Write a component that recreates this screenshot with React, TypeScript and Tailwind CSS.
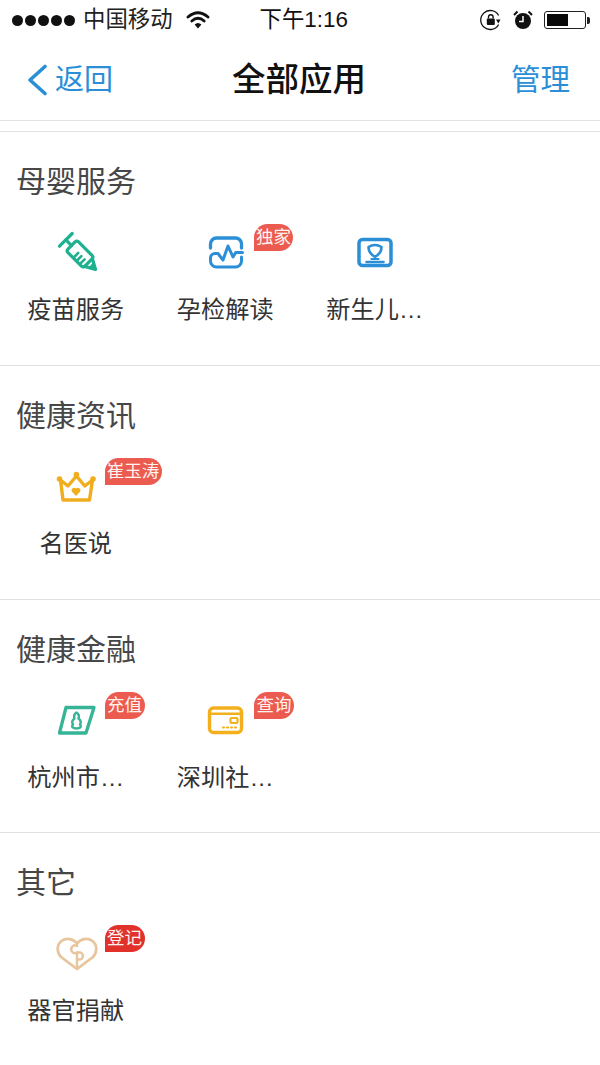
const blue = "#2b8fd8";

function Syringe() {
  return (
    <svg width="48" height="48" viewBox="0 0 48 48" fill="none" stroke="#1fb08f" strokeWidth="3.2" strokeLinecap="round" strokeLinejoin="round">
      <g transform="rotate(45 28 25)">
        <path d="M8 16 V34" />
        <path d="M8 25 H16" />
        <rect x="16" y="17.5" width="24" height="15" rx="2.5" />
        <path d="M26 25.5 V32 M30.5 25.5 V32 M35 25.5 V32" strokeWidth="2.6" />
        <path d="M40 19.5 L50 25 L40 30.5" />
        <path d="M44 22 L50 25 L44 28 Z" fill="#1fb08f" strokeWidth="1" />
      </g>
    </svg>
  );
}

function Pulse() {
  return (
    <svg width="48" height="48" viewBox="0 0 48 48" fill="none" stroke="#2b8fd8" strokeWidth="3.3" strokeLinecap="round" strokeLinejoin="round">
      <path d="M9.5 19 V15 A6 6 0 0 1 15.5 9 H34.5 A6 6 0 0 1 40.5 15 V19" />
      <path d="M40.5 28 V32 A6 6 0 0 1 34.5 38 H15.5 A6 6 0 0 1 9.5 32 V29 A4.5 4.5 0 0 1 14 24.5 H17 L22 31 L27 17 L32 28 L34.7 23.5 H41.5" strokeWidth="3" />
    </svg>
  );
}

function Portrait() {
  return (
    <svg width="48" height="48" viewBox="0 0 48 48" fill="none" stroke="#2b8fd8" strokeWidth="3.5" strokeLinecap="round" strokeLinejoin="round">
      <rect x="8" y="10.5" width="32" height="26" rx="3.5" />
      <path d="M17.5 18 Q24 14 30.5 18 Q30.5 24 24 28 Q17.5 24 17.5 18 Z" strokeWidth="2.6" />
      <path d="M20.5 30 H27.5" strokeWidth="2.2" />
      <path d="M15.5 33 H32.5" strokeWidth="2.6" />
    </svg>
  );
}

function Crown() {
  return (
    <svg width="48" height="48" viewBox="0 0 48 48" fill="none" stroke="#f0ad1e" strokeWidth="3.4" strokeLinecap="round" strokeLinejoin="round">
      <path d="M8.5 17 L11 37 H37.5 L40.5 17 L32.75 23 L24.5 13 L16 23 Z" />
      <circle cx="7.5" cy="16" r="2.8" fill="#f0ad1e" stroke="none" />
      <circle cx="24.4" cy="11.5" r="2.8" fill="#f0ad1e" stroke="none" />
      <circle cx="41" cy="16" r="2.8" fill="#f0ad1e" stroke="none" />
      <path d="M24 33 L19.8 28.6 A2.6 2.6 0 0 1 24 25.6 A2.6 2.6 0 0 1 28.2 28.6 Z" fill="#f0ad1e" stroke="none" />
    </svg>
  );
}

function Bankbook() {
  return (
    <svg width="48" height="48" viewBox="0 0 48 48" fill="none" stroke="#35b596" strokeWidth="3.3" strokeLinecap="round" strokeLinejoin="round">
      <path d="M14 10.5 H42 L34 36 H7.5 Z" />
      <path d="M24.5 15.5 C22 17 22 20 22.5 21.5 C20 23.5 20 26 21 27.5 C19 30 21 31.5 24.5 31.5 C28 31.5 30 30 28 27.5 C29 26 29 23.5 26.5 21.5 C27 20 27 17 24.5 15.5 Z" strokeWidth="2.4" />
    </svg>
  );
}

function Card() {
  return (
    <svg width="48" height="48" viewBox="0 0 48 48" fill="none" stroke="#f3b01c" strokeWidth="3.4" strokeLinecap="round" strokeLinejoin="round">
      <rect x="8.5" y="11" width="32" height="24.5" rx="4" />
      <path d="M9 16.8 H40" strokeWidth="2.6" />
      <rect x="29.5" y="21" width="7" height="5" rx="1" strokeWidth="2.2" />
      <path d="M22 30.5 H23 M26 30.5 H27 M30 30.5 H31 M34 30.5 H35" strokeWidth="2.2" />
    </svg>
  );
}

function Heart() {
  return (
    <svg width="48" height="48" viewBox="0 0 48 48" fill="none" stroke="#e8c59c" strokeWidth="2.8" strokeLinecap="round" strokeLinejoin="round">
      <path d="M25 13.5 C21.5 8.5 14 7.5 9.5 11 C4 15.5 5 22.5 9 27 L25 39 L41 27 C45 22.5 46 15.5 40.5 11 C36 7.5 28.5 8.5 25 13.5 Z" />
      <path d="M25 13.5 V16 A3.8 3.8 0 1 0 25 22.5 V38.5" strokeWidth="2.4" />
      <path d="M25 22.5 H28.5 A3.8 3.8 0 0 1 28.5 29.5 H25" strokeWidth="2.4" />
    </svg>
  );
}

type Item = { label: string; icon: React.ReactNode; badge?: string; badgeClass?: string; badgeWidth?: string };

function AppItem({ label, icon, badge, badgeClass, badgeWidth }: Item) {
  return (
    <div className="relative w-[149.5px] flex flex-col items-center">
      <div className="w-[48px] h-[48px]">{icon}</div>
      <div className="mt-[17px] text-[24.2px] leading-[32px] text-[#333333] whitespace-nowrap">{label}</div>
      {badge && (
        <div className={`absolute left-[103.5px] top-[-5px] h-[27px] ${badgeWidth} rounded-[14px] rounded-bl-none flex items-center justify-center text-[17.5px] leading-none text-[#fff3f0] ${badgeClass}`}>
          {badge}
        </div>
      )}
    </div>
  );
}

function Section({ title, items, last, short }: { title: string; items: Item[]; last?: boolean; short?: boolean }) {
  return (
    <section className={`${short ? "h-[233px]" : "h-[234px]"} ${last ? "" : "border-b border-[#dfdfdf]"} pt-[30px]`}>
      <h2 className="pl-[16px] text-[30px] leading-[40px] font-normal text-[#474747]">{title}</h2>
      <div className="mt-[27px] pl-[1px] flex">
        {items.map((it) => (
          <AppItem key={it.label} {...it} />
        ))}
      </div>
    </section>
  );
}

function StatusBar() {
  return (
    <div className="h-[40px] relative flex items-center justify-between pl-[12px] pr-[10px] text-[#111111]">
      <div className="flex items-center">
        <div className="flex gap-[2px]">
          {[0, 1, 2, 3, 4].map((i) => (
            <div key={i} className="w-[11px] h-[11px] rounded-full bg-[#111111]" />
          ))}
        </div>
        <span className="ml-[8px] text-[22.4px] leading-[30px] text-[#222222]">中国移动</span>
        <svg className="ml-[13px]" width="24" height="20" viewBox="0 0 24 20" fill="none" stroke="#111111" strokeLinecap="round">
          <path d="M2 7 Q12 -1.5 22 7" strokeWidth="2.8" />
          <path d="M5.8 11 Q12 5.6 18.2 11" strokeWidth="2.8" />
          <path d="M12 18.5 L8.6 14.4 Q12 11.4 15.4 14.4 Z" fill="#111111" stroke="none" />
        </svg>
        <span className="ml-[50px] text-[22.4px] leading-[30px] text-[#111111]">下午1:16</span>
      </div>
      <div className="flex items-center">
        <svg width="22" height="22" viewBox="0 0 22 22" fill="none" stroke="#111111" strokeWidth="1.3">
          <path d="M18.6 6.5 A9.5 9.5 0 1 0 18.6 15.5" />
          <path d="M16 10.5 L20.5 10.5 L18.3 14.5 Z" fill="#111111" stroke="none" />
          <rect x="6.8" y="9.5" width="8" height="6.5" rx="1" fill="#111111" stroke="none" />
          <path d="M8.5 9.5 V8 A2.3 2.3 0 0 1 13.1 8 V9.5" strokeWidth="1.4" />
        </svg>
        <svg className="ml-[11px]" width="20" height="20" viewBox="0 0 20 20">
          <circle cx="10" cy="11" r="8" fill="#111111" />
          <path d="M10 6 V11.5 H6" stroke="#fff" strokeWidth="1.5" fill="none" />
          <path d="M1 5 L4.5 1.5 M19 5 L15.5 1.5" stroke="#111111" strokeWidth="2" />
        </svg>
        <div className="ml-[11px] flex items-center">
          <div className="w-[42px] h-[18px] rounded-[3px] border border-[#222222] p-[2px]">
            <div className="w-[21px] h-full bg-[#0a0a0a]" />
          </div>
          <div className="w-[3px] h-[7px] rounded-r-[2px] bg-[#222222] ml-[1px]" />
        </div>
      </div>
    </div>
  );
}

function NavBar() {
  return (
    <div className="h-[81px] border-b border-[#e2e2e2] relative flex items-center justify-between pl-[27px] pr-[30px] pb-[1px]">
      <div className="flex items-center">
        <svg width="21" height="32" viewBox="0 0 21 32" fill="none" stroke={blue} strokeWidth="3.6" strokeLinecap="round" strokeLinejoin="round">
          <path d="M18 2.5 L3 16 L18 29.5" />
        </svg>
        <span className="ml-[7px] text-[29px] leading-[40px] text-[#2b8fd8]">返回</span>
      </div>
      <span className="text-[33.5px] leading-[44px] font-medium text-[#111111] absolute left-[232px]">全部应用</span>
      <span className="text-[29.5px] leading-[40px] text-[#2b8fd8]">管理</span>
    </div>
  );
}

export default function App() {
  const red = "bg-[#ec5b4f]";
  return (
    <div className="w-[600px] h-[1065px] bg-white overflow-hidden font-['Liberation_Sans','Noto_Sans_CJK_SC',sans-serif]">
      <StatusBar />
      <NavBar />
      <div className="h-[11px] border-b border-[#e2e2e2]" />
      <Section
        title="母婴服务"
        items={[
          { label: "疫苗服务", icon: <Syringe /> },
          { label: "孕检解读", icon: <Pulse />, badge: "独家", badgeClass: red, badgeWidth: "w-[39px]" },
          { label: "新生儿…", icon: <Portrait /> },
        ]}
      />
      <Section
        title="健康资讯"
        items={[{ label: "名医说", icon: <Crown />, badge: "崔玉涛", badgeClass: red, badgeWidth: "w-[57px]" }]}
      />
      <Section
        short
        title="健康金融"
        items={[
          { label: "杭州市…", icon: <Bankbook />, badge: "充值", badgeClass: red, badgeWidth: "w-[40px]" },
          { label: "深圳社…", icon: <Card />, badge: "查询", badgeClass: red, badgeWidth: "w-[40px]" },
        ]}
      />
      <Section
        last
        title="其它"
        items={[{ label: "器官捐献", icon: <Heart />, badge: "登记", badgeClass: "bg-[#e0322b]", badgeWidth: "w-[40px]" }]}
      />
    </div>
  );
}
